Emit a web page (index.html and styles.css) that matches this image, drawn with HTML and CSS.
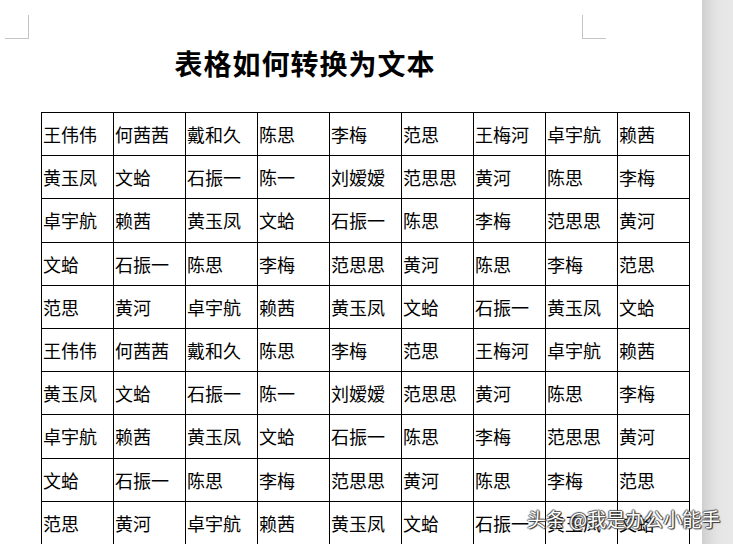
FILE: index.html
```html
<!DOCTYPE html>
<html lang="zh">
<head>
<meta charset="utf-8">
<title>表格如何转换为文本</title>
<link rel="stylesheet" href="styles.css">
</head>
<body>
<div class="screen">
  <div class="doc">
    <div class="marks">
      <div class="mark mark-l"></div>
      <div class="mark mark-r"></div>
    </div>
    <h1 class="title">表格如何转换为文本</h1>
    <table class="grid">
      <tbody>
        <tr><td>王伟伟</td><td>何茜茜</td><td>戴和久</td><td>陈思</td><td>李梅</td><td>范思</td><td>王梅河</td><td>卓宇航</td><td>赖茜</td></tr>
        <tr><td>黄玉凤</td><td>文蛤</td><td>石振一</td><td>陈一</td><td>刘嫒嫒</td><td>范思思</td><td>黄河</td><td>陈思</td><td>李梅</td></tr>
        <tr><td>卓宇航</td><td>赖茜</td><td>黄玉凤</td><td>文蛤</td><td>石振一</td><td>陈思</td><td>李梅</td><td>范思思</td><td>黄河</td></tr>
        <tr><td>文蛤</td><td>石振一</td><td>陈思</td><td>李梅</td><td>范思思</td><td>黄河</td><td>陈思</td><td>李梅</td><td>范思</td></tr>
        <tr><td>范思</td><td>黄河</td><td>卓宇航</td><td>赖茜</td><td>黄玉凤</td><td>文蛤</td><td>石振一</td><td>黄玉凤</td><td>文蛤</td></tr>
        <tr><td>王伟伟</td><td>何茜茜</td><td>戴和久</td><td>陈思</td><td>李梅</td><td>范思</td><td>王梅河</td><td>卓宇航</td><td>赖茜</td></tr>
        <tr><td>黄玉凤</td><td>文蛤</td><td>石振一</td><td>陈一</td><td>刘嫒嫒</td><td>范思思</td><td>黄河</td><td>陈思</td><td>李梅</td></tr>
        <tr><td>卓宇航</td><td>赖茜</td><td>黄玉凤</td><td>文蛤</td><td>石振一</td><td>陈思</td><td>李梅</td><td>范思思</td><td>黄河</td></tr>
        <tr><td>文蛤</td><td>石振一</td><td>陈思</td><td>李梅</td><td>范思思</td><td>黄河</td><td>陈思</td><td>李梅</td><td>范思</td></tr>
        <tr><td>范思</td><td>黄河</td><td>卓宇航</td><td>赖茜</td><td>黄玉凤</td><td>文蛤</td><td>石振一</td><td>黄玉凤</td><td>文蛤</td></tr>
      </tbody>
    </table>
  </div>
  <div class="scrollbar"></div>
  <div class="watermark">头条 @我是办公小能手</div>
</div>
</body>
</html>
```

FILE: styles.css
```css
html, body {
  margin: 0;
  padding: 0;
  background: #ffffff;
}
body {
  width: 733px;
  height: 544px;
  overflow: hidden;
  font-family: "Noto Sans CJK SC", "Noto Sans", sans-serif;
}
.screen {
  position: relative;
  display: flex;
  width: 733px;
  height: 544px;
  overflow: hidden;
}
.doc {
  width: 702px;
  flex: 0 0 702px;
  background: #ffffff;
  overflow: hidden;
}
.marks {
  display: flex;
  gap: 553px;
  padding: 15px 0 0 5px;
}
.mark {
  width: 23px;
  height: 23px;
  box-sizing: content-box;
}
.mark-l {
  border-right: 1px solid #c4c4c4;
  border-bottom: 1px solid #c4c4c4;
}
.mark-r {
  border-left: 1px solid #c4c4c4;
  border-bottom: 1px solid #c4c4c4;
}
.title {
  margin: 10px 0 0 0;
  width: 610px;
  text-align: center;
  font-size: 28px;
  line-height: 29px;
  font-weight: 700;
  color: #000000;
  letter-spacing: 1px;
}
.grid {
  margin: 34px 0 0 41px;
  border-collapse: collapse;
  table-layout: fixed;
  width: 649px;
}
.grid td {
  height: 42.2px;
  padding: 0 0 0 1px;
  border: 1px solid #000000;
  font-size: 18px;
  line-height: 20px;
  color: #000000;
  white-space: nowrap;
  vertical-align: middle;
  overflow: hidden;
}
.watermark {
  position: absolute;
  left: 527px;
  top: 507px;
  font-size: 19px;
  line-height: 24px;
  color: #ffffff;
  white-space: nowrap;
  text-shadow: 1px 1px 1px #333333, -1px 0 1px #555555, 0 -1px 1px #555555, 1px 0 1px #444444;
}
.scrollbar {
  flex: 0 0 31px;
  height: 544px;
  background: linear-gradient(to right, #cfcfcf 0%, #dedede 30%, #e6e6e6 60%, #e8e8e8 100%);
}
```
